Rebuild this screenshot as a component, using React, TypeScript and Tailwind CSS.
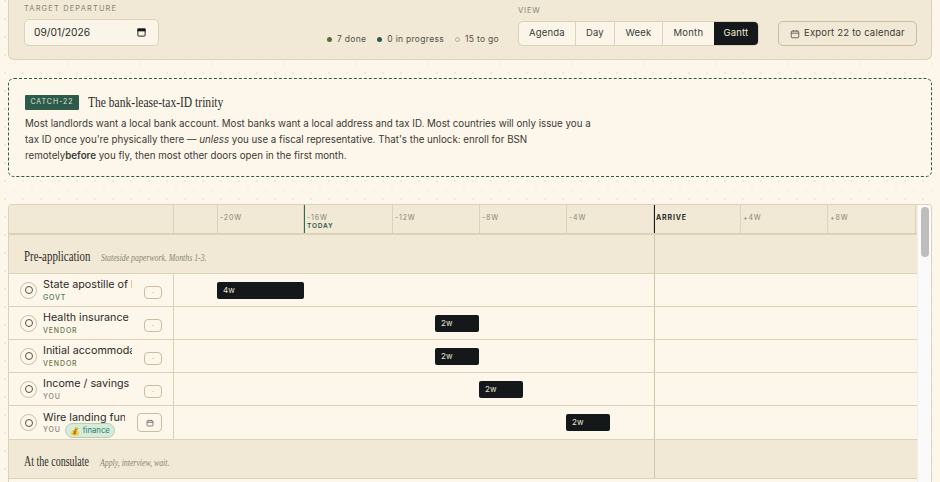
import React from "react";

const sans = "font-['Inter',sans-serif]";
const serif = "font-['Liberation_Serif',serif]";

function CalIcon({ className = "" }: { className?: string }) {
  return (
    <svg viewBox="0 0 12 12" className={className} fill="none" stroke="currentColor" strokeWidth="1">
      <rect x="1.5" y="2.5" width="9" height="8" rx="1" />
      <path d="M1.5 5h9M4 1.2v2M8 1.2v2" />
    </svg>
  );
}

function Dot({ c, label }: { c: string; label: string }) {
  return (
    <span className="flex items-center gap-[5px] whitespace-nowrap">
      <span className={c} />
      <span>{label}</span>
    </span>
  );
}

function Row({
  title,
  tag,
  tagColor,
  start,
  width,
  label,
  tall,
}: {
  title: string;
  tag: string;
  tagColor: string;
  start: number;
  width: number;
  label: string;
  tall?: boolean;
}) {
  return (
    <div className={`flex border-b border-[#dcd2b8] ${tall ? "h-[34px]" : "h-[33px]"}`}>
      <div className="w-[165px] shrink-0 border-r border-[#dcd2b8] flex items-center pl-[11px] relative">
        <span className="w-[17px] h-[17px] rounded-full border border-[#c9bd9f] flex items-center justify-center shrink-0">
          <span className="w-[8px] h-[8px] rounded-full border border-[#55524a]" />
        </span>
        <div className="ml-[6px] min-w-0 pt-[2px]">
          <div className={`overflow-hidden whitespace-nowrap text-[10.75px] leading-[14px] text-[#2c2c28] ${tall ? "w-[82px]" : "w-[89px]"}`}>
            {title}
          </div>
          <div className="flex items-center gap-[4px] h-[12px]">
            <span className={`text-[7px] tracking-[0.12em] font-medium ${tagColor}`}>{tag}</span>
            {tall && (
              <span className="flex items-center h-[15px] px-[4px] gap-[3px] rounded-full bg-[#d5ebdc] border border-[#b9cfa9] text-[7.75px] text-[#2f7a5e]">
                <span className="text-[8px] leading-none">💰</span>
                finance
              </span>
            )}
          </div>
        </div>
        {tall ? (
          <span className="absolute right-[11px] top-[7px] w-[25px] h-[19px] rounded-[4px] border border-[#c9bd9f] flex items-center justify-center text-[#4a4a44]">
            <CalIcon className="w-[8px] h-[8px]" />
          </span>
        ) : (
          <span className="absolute right-[11px] top-[12px] w-[18px] h-[13px] rounded-[4px] border border-[#c9bd9f] flex items-center justify-center">
            <span className="w-[2px] h-px bg-[#e0d7c0]" />
          </span>
        )}
      </div>
      <div className="relative flex-1">
        <div className="absolute top-0 bottom-0 left-[480px] w-px bg-[#cfc5ab]" />
        <div
          className="absolute top-[8px] h-[17px] rounded-[2px] bg-[#14181a] text-[#e9e3d2] text-[8px] leading-[17px] pl-[6px]"
          style={{ left: start, width }}
        >
          {label}
        </div>
      </div>
    </div>
  );
}

function Section({ title, note, titleClass }: { title: string; note: string; titleClass: string }) {
  return (
    <div className="flex items-center h-[39px] pl-[15px] pt-[6px] bg-[#f1e9d5] border-b border-[#dcd2b8] relative">
      <span className={`${serif} ${titleClass} block shrink-0 whitespace-nowrap origin-left text-[14.5px] text-[#2c2c28]`}>{title}</span>
      <span className={`${serif} block whitespace-nowrap origin-left scale-x-[0.78] italic text-[10px] text-[#8a8574]`}>{note}</span>
      <div className="absolute top-0 bottom-0 left-[645px] w-px bg-[#cfc5ab]" />
    </div>
  );
}

const weeks: { label: string; w: number }[] = [
  { label: "", w: 44 },
  { label: "-20W", w: 86 },
  { label: "-16W", w: 89 },
  { label: "-12W", w: 87 },
  { label: "-8W", w: 87 },
  { label: "-4W", w: 87 },
  { label: "ARRIVE", w: 87 },
  { label: "+4W", w: 87 },
  { label: "+8W", w: 88 },
];

export default function App() {
  return (
    <div
      className={`${sans} w-[940px] h-[482px] overflow-hidden bg-[#fdf6ea] bg-[radial-gradient(#f2ead9_1px,transparent_1px),radial-gradient(#f6efdf_1px,transparent_1px)] bg-[size:18px_18px] bg-[position:-4px_-8px,5px_1px] px-[8px] text-[#2c2c28]`}
    >
      <div className="h-[60px] bg-[#f1e9d5] border border-t-0 border-[#dcd2b8] rounded-b-[6px] flex items-start pl-[15px] pr-[8px]">
        <div className="w-[135px] shrink-0">
          <div className="text-[7.5px] tracking-[0.15em] text-[#8a8574] leading-[9px] mt-[4px]">TARGET DEPARTURE</div>
          <div className="mt-[6px] w-[135px] h-[27px] rounded-[5px] bg-[#fbf5e9] border border-[#dcd2b8] flex items-center justify-between pl-[9px] pr-[12px] text-[10.25px] text-[#2c2c28]">
            <span>09/01/2026</span>
            <svg viewBox="0 0 10 10" className="w-[9px] h-[9px]" fill="none" stroke="#111" strokeWidth="1">
              <rect x="1" y="1.5" width="8" height="7.5" rx="0.8" />
              <rect x="1" y="1" width="8" height="2.2" fill="#111" />
            </svg>
          </div>
        </div>
        <div className="ml-[168px] mt-[34px] shrink-0 flex items-center gap-[11px] text-[8.5px] tracking-[0.3px] text-[#55524a] leading-[10px]">
          <Dot c="w-[5px] h-[5px] rounded-full bg-[#5a6b3a]" label="7 done" />
          <Dot c="w-[5px] h-[5px] rounded-full bg-[#2d5a4a]" label="0 in progress" />
          <Dot c="w-[5px] h-[5px] rounded-full border border-[#b5ad97]" label="15 to go" />
        </div>
        <div className="ml-[19px] mt-[6px] shrink-0">
          <div className="text-[7.5px] tracking-[0.12em] text-[#8a8574] leading-[9px]">VIEW</div>
          <div className="mt-[6px] flex h-[25px] rounded-[5px] border border-[#dcd2b8] bg-[#fbf5e9] overflow-hidden text-[9.5px] tracking-[0.2px] text-[#3c3c36]">
            <span className="w-[57px] flex items-center justify-center border-r border-[#dcd2b8]">Agenda</span>
            <span className="w-[39px] flex items-center justify-center border-r border-[#dcd2b8]">Day</span>
            <span className="w-[48px] flex items-center justify-center border-r border-[#dcd2b8]">Week</span>
            <span className="w-[51px] flex items-center justify-center">Month</span>
            <span className="w-[44px] flex items-center justify-center bg-[#14181a] text-[#f1e9d5]">Gantt</span>
          </div>
        </div>
        <div className="ml-[19px] mt-[21px] shrink-0 w-[139px] h-[25px] rounded-[5px] border border-[#c9bd9f] flex items-center justify-center gap-[4px] text-[9.5px] tracking-[0.2px] text-[#3c3c36]">
          <CalIcon className="w-[10px] h-[10px] text-[#55524a]" />
          Export 22 to calendar
        </div>
      </div>

      <div className="mt-[18px] h-[99px] rounded-[6px] border border-dashed border-[#2d5a4a] bg-[#fdf6ea] pl-[16px] pt-[16px]">
        <div className="flex items-center h-[15px]">
          <span className="w-[54px] h-[15px] flex items-center justify-center rounded-[1px] bg-[#2d5a4a] text-[#dbe5d6] text-[7px] tracking-[0.14em]">
            CATCH-22
          </span>
          <span className={`${serif} block whitespace-nowrap origin-left scale-x-[0.77] ml-[9px] text-[15px] text-[#2c2c28]`}>The bank-lease-tax-ID trinity</span>
        </div>
        <p className="mt-[6px] w-[572px] text-[9.75px] leading-[16px] text-[#3a3a34]">
          Most landlords want a local bank account. Most banks want a local address and tax ID. Most countries will only issue you a tax ID once you're physically there — <em>unless</em> you use a fiscal representative. That's the unlock: enroll for BSN remotely<strong className="font-semibold">before</strong> you fly, then most other doors open in the first month.
        </p>
      </div>

      <div className="mt-[27px] h-[300px] flex rounded-t-[4px] border-t border-l border-r border-[#dcd2b8] overflow-hidden relative bg-[#fdf6ea]">
        <div className="w-[908px] shrink-0">
          <div className="flex h-[30px] bg-[#f1e9d5] border-b-2 border-[#dcd2b8]">
            <div className="w-[165px] shrink-0 border-r border-[#dcd2b8]" />
            {weeks.map((w, i) => {
              const today = w.label === "-16W";
              const arrive = w.label === "ARRIVE";
              return (
                <div
                  key={i}
                  style={{ width: w.w }}
                  className={`shrink-0 pt-[8px] text-[7px] leading-[9px] tracking-[0.12em] ${
                    today
                      ? "pl-[2px] border-r border-l border-l-[#2d6a50] border-r-[#dcd2b8] text-[#8a8574]"
                      : arrive
                        ? "pl-[1px] border-r border-l border-l-[#14181a] border-r-[#dcd2b8] text-[#2c2c28] font-bold"
                        : "pl-[2px] border-r border-[#dcd2b8] text-[#8a8574]"
                  }`}
                >
                  {w.label}
                  {today && <div className="text-[#2d5a4a] font-semibold text-[6.5px]">TODAY</div>}
                </div>
              );
            })}
          </div>
          <Section title="Pre-application" note="Stateside paperwork. Months 1-3." titleClass="w-[77px] scale-x-[0.75]" />
          <Row title="State apostille of birth certificate" tag="GOVT" tagColor="text-[#4f7a5e]" start={43} width={87} label="4w" />
          <Row title="Health insurance coverage" tag="VENDOR" tagColor="text-[#6b7a4a]" start={261} width={44} label="2w" />
          <Row title="Initial accommodation" tag="VENDOR" tagColor="text-[#6b7a4a]" start={261} width={44} label="2w" />
          <Row title="Income / savings check" tag="YOU" tagColor="text-[#8a8574]" start={305} width={44} label="2w" />
          <Row title="Wire landing funds" tag="YOU" tagColor="text-[#8a8574]" start={392} width={44} label="2w" tall />
          <Section title="At the consulate" note="Apply, interview, wait." titleClass="w-[76px] scale-x-[0.69]" />
        </div>
        <div className="flex-1 bg-[#fafafa] border-l border-[#eeeeee] relative">
          <div className="absolute left-[3px] top-[2px] w-[8px] h-[50px] rounded-full bg-[#bdbdbd]" />
        </div>
      </div>
    </div>
  );
}
